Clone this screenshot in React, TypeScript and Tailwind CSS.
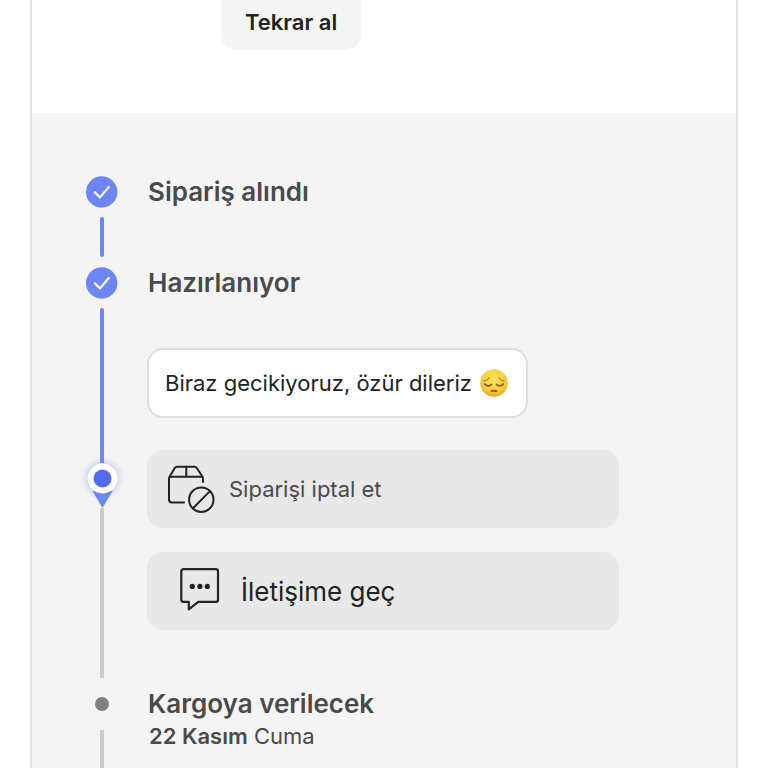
import type { ReactNode } from 'react';

function CheckBadge() {
    return (
        <svg className="h-8 w-8 shrink-0" viewBox="0 0 32 32" fill="none" aria-hidden="true">
            <circle cx="15.7" cy="16" r="15.7" fill="#6c85f8" />
            <path d="M8.8 16.2l5.2 5.2 8.8-10.4" stroke="#fff" strokeWidth="2.2" strokeLinecap="round" strokeLinejoin="round" />
        </svg>
    );
}

function PendingDot() {
    return (
        <div className="flex h-8 shrink-0 items-center">
            <span className="h-3.5 w-3.5 rounded-full bg-[#808080]" />
        </div>
    );
}

function LocationPin() {
    return (
        <svg className="h-[45px] w-8 shrink-0 overflow-visible" viewBox="0 0 32 45" fill="none" aria-hidden="true">
            <defs>
                <radialGradient id="pin-glow">
                    <stop offset="0.6" stopColor="#8298fa" stopOpacity="0.45" />
                    <stop offset="0.8" stopColor="#8298fa" stopOpacity="0.15" />
                    <stop offset="1" stopColor="#8298fa" stopOpacity="0" />
                </radialGradient>
            </defs>
            <circle cx="16.5" cy="15.5" r="22" fill="url(#pin-glow)" />
            <path d="M6.5 28h20L16.5 45z" fill="#6c85f8" />
            <circle cx="16.5" cy="15.5" r="15" fill="#fff" />
            <circle cx="16.5" cy="15.5" r="9" fill="#4f6bf3" />
        </svg>
    );
}

function CancelBoxIcon() {
    return (
        <svg className="h-12 w-12 shrink-0" viewBox="0 0 48 48" fill="none" stroke="#222" strokeWidth="2" strokeLinecap="round" strokeLinejoin="round" aria-hidden="true">
            <path d="M17 37.5H5a3 3 0 0 1-3-3V14c0-1 .3-2 .8-2.8l5-8.2A2.6 2.6 0 0 1 10 1.800h17.600a2.600 2.600 0 0 1 2.200 1.200l5.400 8.200c.5.800.8 1.800.8 2.800v3" />
            <path d="M2.700 11.800h32.700M19.300 1.800v10" />
            <circle cx="34.3" cy="34.7" r="12.2" />
            <path d="M26 43.200l16.700-16.800" />
        </svg>
    );
}

function ChatIcon() {
    return (
        <svg className="h-12 w-12 shrink-0" viewBox="0 0 48 48" fill="none" aria-hidden="true">
            <path
                d="M4.500 2.200h32.300a2.200 2.200 0 0 1 2.200 2.200v28.300a2.200 2.200 0 0 1-2.200 2.200H19.300L9.800 42.300V34.900H4.500a2.200 2.200 0 0 1-2.200-2.200V4.400a2.200 2.200 0 0 1 2.200-2.200z"
                stroke="#222"
                strokeWidth="2.2"
                strokeLinejoin="round"
            />
            <g fill="#222">
                <circle cx="13.3" cy="19.4" r="2.6" />
                <circle cx="20.9" cy="19.4" r="2.6" />
                <circle cx="28.3" cy="19.4" r="2.6" />
            </g>
        </svg>
    );
}

function PensiveFace() {
    return (
        <svg className="h-7 w-7 shrink-0" viewBox="0 0 28 28" fill="none" role="img" aria-label="😔">
            <defs>
                <radialGradient id="face" cx="0.5" cy="0.4" r="0.6">
                    <stop offset="0" stopColor="#fee35c" />
                    <stop offset="0.65" stopColor="#fccf40" />
                    <stop offset="1" stopColor="#f0a324" />
                </radialGradient>
            </defs>
            <circle cx="14" cy="14" r="13.7" fill="url(#face)" />
            <g stroke="#8a5a14" strokeLinecap="round">
                <path d="M3.800 12c2.600-.2 4.400-1.400 5.500-3.300M24.200 12c-2.600-.2-4.400-1.400-5.500-3.300" strokeWidth="1" />
                <path d="M4.800 15c1.500 2.200 4.900 2.500 6.700.5M23.200 15c-1.500 2.200-4.900 2.500-6.700.5" strokeWidth="1.7" />
                <path d="M11.600 22.200c1.400-.4 3.400-.4 4.800 0" strokeWidth="2" />
            </g>
        </svg>
    );
}

function Step({ rail, title, children }: { rail: ReactNode; title: string; children?: ReactNode }) {
    return (
        <li className="flex gap-[29px] last:grow">
            <div className="flex w-8 shrink-0 flex-col items-center">{rail}</div>
            <div className="min-w-0 flex-1">
                <h2 className="px-px text-[26px] leading-8 font-semibold text-[#4a4a4a]">{title}</h2>
                {children}
            </div>
        </li>
    );
}

export default function App() {
    return (
        <div className="min-h-screen bg-white px-[30px] font-['Inter',sans-serif]">
            <main className="flex min-h-screen flex-col border-x-2 border-[#e0e0e0]">
                <div className="pb-[63px] pl-[189px]">
                    <button type="button" className="rounded-b-2xl bg-[#f4f4f4] px-6 pt-1.5 pb-3 text-[22px] leading-8 font-semibold text-[#222]">
                        Tekrar al
                    </button>
                </div>

                <section className="flex grow flex-col bg-[#f4f4f4] pt-[63px] pr-[117px] pl-[54px]">
                    <ol className="flex grow flex-col">
                        <Step
                            title="Sipariş alındı"
                            rail={
                                <>
                                    <CheckBadge />
                                    <span className="mt-[9px] mb-2.5 h-10 w-1 rounded-full bg-[#6c85f8]" />
                                </>
                            }
                        />
                        <Step
                            title="Hazırlanıyor"
                            rail={
                                <>
                                    <CheckBadge />
                                    <span className="mt-[9px] h-[155px] w-1 shrink-0 rounded-t-full bg-[#6c85f8]" />
                                    <LocationPin />
                                    <span className="mb-2.5 w-1 grow bg-[#cacaca]" />
                                </>
                            }
                        >
                            <div className="flex flex-col gap-6 pt-[49px] pb-[58px]">
                                <p className="mb-2 flex items-center gap-2 self-start rounded-2xl border-2 border-[#dedede] bg-white py-[17px] pr-[18px] pl-4 text-[22px] leading-8 text-[#222]">
                                    Biraz gecikiyoruz, özür dileriz
                                    <PensiveFace />
                                </p>
                                <button type="button" className="flex items-center gap-3.5 rounded-2xl bg-[#e8e8e8] px-5 py-[15px] text-left text-[22px] text-[#4a4a4a]">
                                    <CancelBoxIcon />
                                    Siparişi iptal et
                                </button>
                                <button type="button" className="flex items-center gap-3.5 rounded-2xl bg-[#e8e8e8] px-8 py-[15px] text-left text-[26px] text-[#222]">
                                    <ChatIcon />
                                    İletişime geç
                                </button>
                            </div>
                        </Step>
                        <Step
                            title="Kargoya verilecek"
                            rail={
                                <>
                                    <PendingDot />
                                    <span className="mt-2.5 w-1 grow bg-[#cacaca]" />
                                </>
                            }
                        >
                            <p className="px-0.5 text-[22px] leading-8 text-[#4a4a4a]">
                                <strong className="font-semibold">22 Kasım</strong> Cuma
                            </p>
                        </Step>
                    </ol>
                </section>
            </main>
        </div>
    );
}
